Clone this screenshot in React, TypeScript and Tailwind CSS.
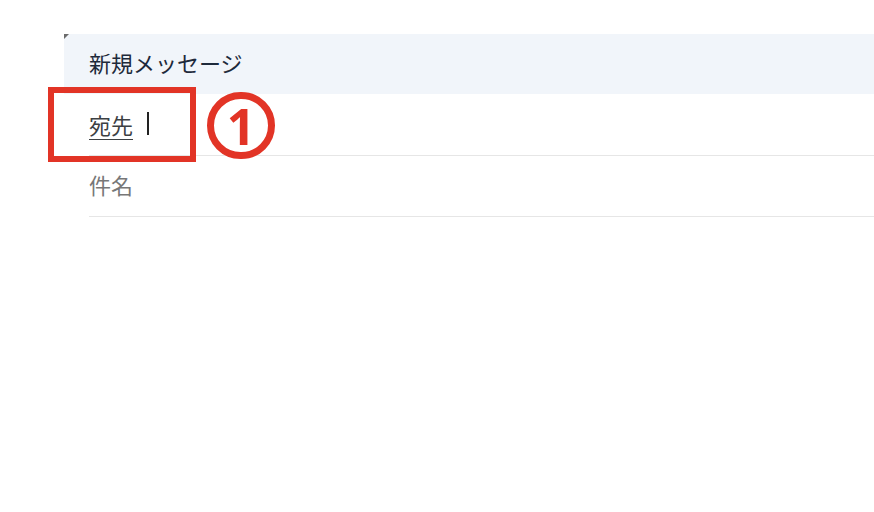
import React from "react";

const jp = { fontFamily: '"Noto Sans CJK JP", "Noto Sans", sans-serif' };

const App: React.FC = () => {
  return (
    <div className="relative w-[874px] h-[512px] bg-white overflow-hidden" style={jp}>
      <div className="pt-[34px] pl-[64px]">
        <div className="relative h-[60px] bg-[#f1f5fa] flex items-center pl-[25px] pb-[5px]">
          <div className="absolute left-0 top-0 w-0 h-0 border-t-[5px] border-r-[5px] border-t-[#6b6b6b] border-r-transparent"></div>
          <span className="text-[22px] text-[#1e2a3b] leading-none">新規メッセージ</span>
        </div>
        <div className="ml-[25px]">
          <div className="h-[62px] flex items-center border-b border-[#e6e6e6] pb-[2px]">
            <span className="text-[22px] text-[#3c4043] underline underline-offset-[5px] decoration-1 leading-none">宛先</span>
            <span className="ml-[14px] w-[2px] h-[23px] bg-[#222]"></span>
          </div>
          <div className="h-[61px] flex items-center border-b border-[#e6e6e6] pb-[5px]">
            <span className="text-[22px] text-[#777] leading-none">件名</span>
          </div>
        </div>
      </div>

      <div className="absolute left-[48px] top-[87px] w-[148px] h-[75px] border-[6px] border-[#e23426]"></div>
      <div className="absolute left-[207px] top-[92px] w-[68px] h-[67px] rounded-full border-[7px] border-[#e23426] flex items-center justify-center">
        <span className="text-[50px] font-bold text-[#e23426] leading-none" style={{ fontFamily: '"Noto Sans", sans-serif' }}>1</span>
      </div>
    </div>
  );
};

export default App;
